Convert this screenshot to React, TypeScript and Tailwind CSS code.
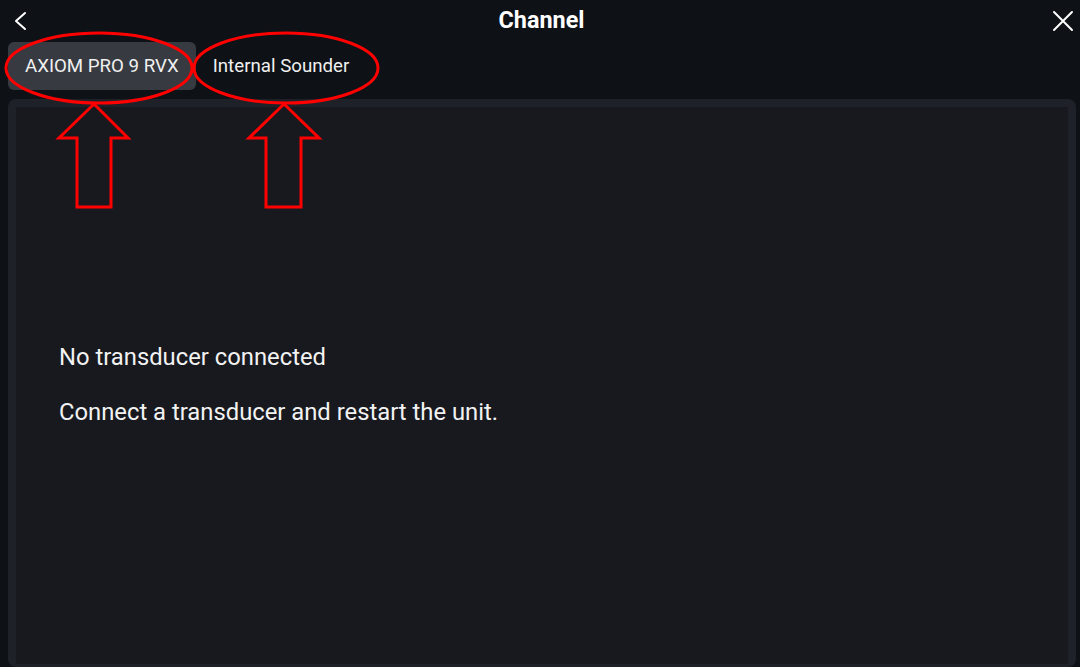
import React from "react";

export default function App() {
  return (
    <div
      className="relative w-[1080px] h-[667px] overflow-hidden bg-[#0e1115] text-white flex flex-col"
      style={{ fontFamily: "Roboto, 'Noto Sans', sans-serif" }}
    >
      {/* Header */}
      <div className="h-[42px] grid grid-cols-[1fr_auto_1fr] items-center px-[12px] shrink-0">
        <svg width="16" height="24" viewBox="0 0 16 24">
          <path d="M13 4 L4 12 L13 20" stroke="#fff" strokeWidth="2" fill="none" strokeLinecap="round" strokeLinejoin="round" />
        </svg>
        <div className="text-[23.4px] font-bold leading-none -mt-[1px] ml-[3px]">Channel</div>
        <div className="flex justify-end">
          <svg width="22" height="22" viewBox="0 0 22 22" className="mr-[-6px]">
            <path d="M2 2 L20 20 M20 2 L2 20" stroke="#fff" strokeWidth="2" strokeLinecap="round" />
          </svg>
        </div>
      </div>

      {/* Tabs */}
      <div className="flex items-center pl-[8px] h-[48px] shrink-0">
        <div className="h-[48px] px-[17px] pt-[1px] flex items-center rounded-[6px] bg-[#373a41] text-[18.7px] text-[#f0f0f0]">
          AXIOM PRO 9 RVX
        </div>
        <div className="h-[48px] px-[17px] pt-[1px] flex items-center text-[18.7px] text-[#f0f0f0]">
          Internal Sounder
        </div>
      </div>

      {/* Panel */}
      <div className="mt-[9px] mx-[8px] mr-[4px] flex-1 rounded-[8px] bg-[#1e2128] pt-[8px] px-[8px] pb-[3px] flex">
        <div className="flex-1 bg-[#18191e] flex flex-col pl-[43px] pt-[236px]">
          <div className="text-[23.8px] leading-[28px] text-[#f2f2f2]">No transducer connected</div>
          <div className="text-[23.8px] leading-[28px] text-[#f2f2f2] mt-[27px]">
            Connect a transducer and restart the unit.
          </div>
        </div>
      </div>

      {/* Red annotations */}
      <svg className="absolute left-0 top-0 pointer-events-none" width="1080" height="667">
        <ellipse cx="99" cy="68" rx="93" ry="35" fill="none" stroke="#ff0000" strokeWidth="3" />
        <ellipse cx="286" cy="68" rx="92" ry="35" fill="none" stroke="#ff0000" strokeWidth="3" />
        <path d="M94 104 L128 138 L111 138 L111 207 L77 207 L77 138 L59 138 Z" fill="none" stroke="#ff0000" strokeWidth="3" strokeLinejoin="miter" />
        <path d="M284 104 L319 138 L301 138 L301 207 L266 207 L266 138 L249 138 Z" fill="none" stroke="#ff0000" strokeWidth="3" strokeLinejoin="miter" />
      </svg>
    </div>
  );
}
